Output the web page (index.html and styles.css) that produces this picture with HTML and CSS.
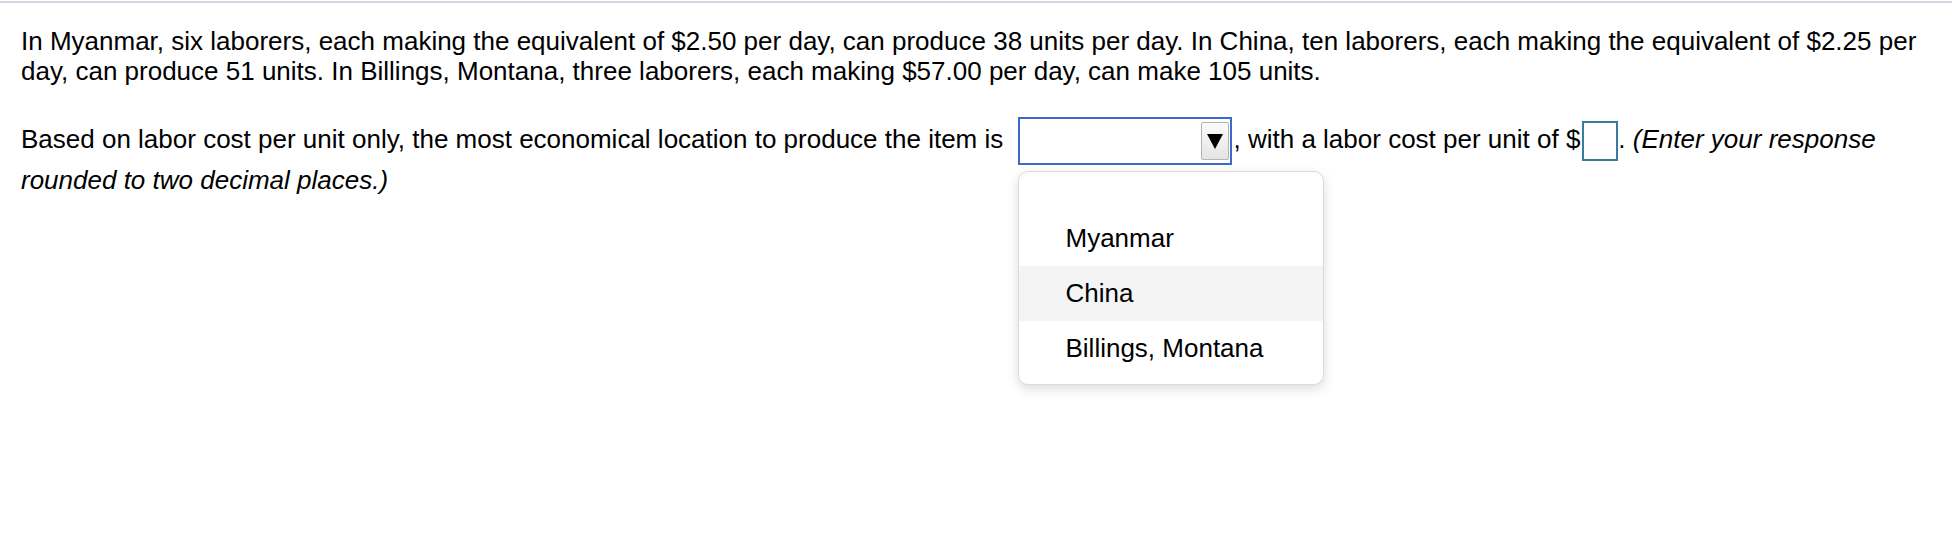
FILE: index.html
```html
<!DOCTYPE html>
<html lang="en">
<head>
<meta charset="utf-8">
<title>Question</title>
<link rel="stylesheet" href="styles.css">
</head>
<body>
<div class="page">
  <div class="topline"></div>
  <div class="content">
    <p class="para">In Myanmar, six laborers, each making the equivalent of $2.50 per day, can produce 38 units per day. In China, ten laborers, each making the equivalent of $2.25 per day, can produce 51 units. In Billings, Montana, three laborers, each making $57.00 per day, can make 105 units.</p>
    <p class="para question">Based on labor cost per unit only, the most economical location to produce the item is <span class="select-wrap"><span class="select"><span class="select-btn"><svg class="arrow" width="16" height="15" viewBox="0 0 16 15"><path d="M0 0 H16 L8 15 Z" fill="#000"/></svg></span></span><span class="menu"><span class="menu-item">Myanmar</span><span class="menu-item active">China</span><span class="menu-item">Billings, Montana</span></span></span>, with a labor cost per unit of $<span class="answer-box"></span>. <em>(Enter your response rounded to two decimal places.)</em></p>
  </div>
</div>
</body>
</html>
```

FILE: styles.css
```css
html, body {
  margin: 0;
  padding: 0;
  background: #ffffff;
}

body {
  font-family: "Liberation Sans", Arial, sans-serif;
  font-size: 26px;
  color: #000000;
}

.page {
  min-height: 554px;
}

.topline {
  margin-top: 1px;
  height: 0;
  border-top: 2px solid #d0d5df;
}

.content {
  padding: 23px 22px 0 21px;
}

.para {
  margin: 0;
  line-height: 30px;
}

.question {
  margin-top: 31px;
}

.select-wrap {
  position: relative;
  display: inline-block;
  vertical-align: middle;
  margin-left: 7px;
  margin-right: 2px;
}

.select {
  box-sizing: border-box;
  display: flex;
  justify-content: flex-end;
  align-items: center;
  width: 214px;
  height: 48px;
  border: 2px solid #3d68cc;
  background: #ffffff;
  padding-right: 1px;
}

.select-btn {
  box-sizing: border-box;
  display: flex;
  align-items: center;
  justify-content: center;
  width: 28px;
  height: 38px;
  border: 1px solid #b4b4b4;
  border-radius: 2px;
  background: linear-gradient(#fbfbfb, #e4e4e4);
}

.arrow {
  display: block;
}

.menu {
  position: absolute;
  left: 0;
  top: calc(100% + 6px);
  box-sizing: border-box;
  display: flex;
  flex-direction: column;
  width: 306px;
  padding: 39px 0 8px 0;
  border: 1px solid #dadada;
  border-radius: 10px;
  background: #ffffff;
  box-shadow: 0 4px 12px rgba(0, 0, 0, 0.14);
  z-index: 2;
}

.menu-item {
  display: block;
  height: 55px;
  line-height: 55px;
  padding-left: 47px;
  white-space: nowrap;
  color: #000000;
}

.menu-item.active {
  background: #f4f4f4;
}

.answer-box {
  box-sizing: border-box;
  display: inline-block;
  vertical-align: middle;
  width: 36px;
  height: 40px;
  margin-left: 2px;
  border: 2px solid #3a7c9f;
  background: #ffffff;
}

em {
  font-style: italic;
}
```
